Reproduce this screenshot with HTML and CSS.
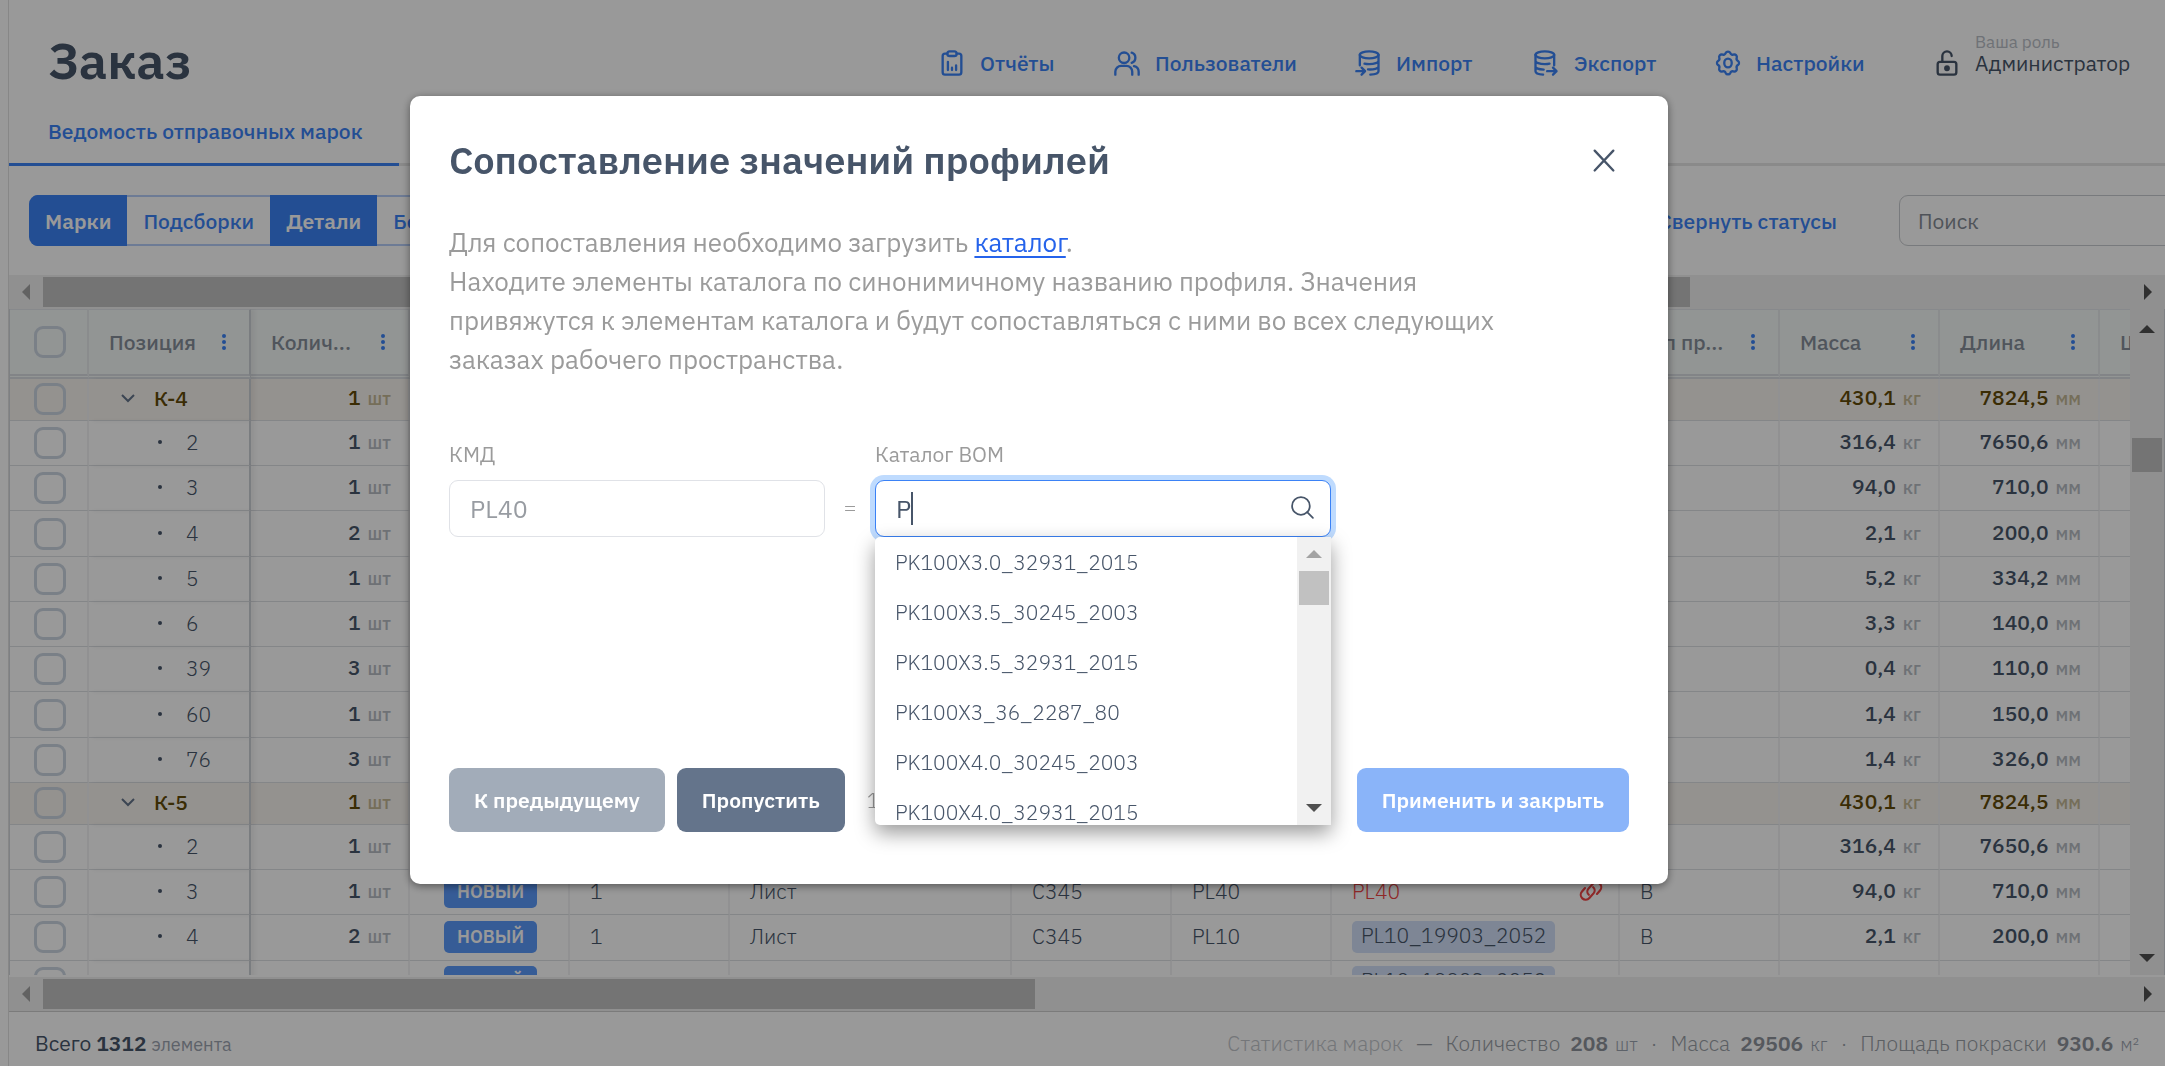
FILE: index.html
```html
<!DOCTYPE html>
<html lang="ru">
<head>
<meta charset="utf-8">
<meta name="viewport" content="width=device-width, initial-scale=1">
<title>Заказ</title>
<link rel="stylesheet" href="styles.css">
</head>
<body>
<div class="page">
  <header class="header">
    <h1 class="title">Заказ</h1>
    <nav class="nav">
      <a class="nav-item" href="#">
        <svg class="icon" viewBox="0 0 24 24"><path d="M8 4H6a2 2 0 0 0-2 2v14a2 2 0 0 0 2 2h12a2 2 0 0 0 2-2V6a2 2 0 0 0-2-2h-2"/><rect x="8" y="2" width="8" height="4" rx="2"/><path d="M8.500 11v7M12 16v2M15.500 14v4"/></svg>
        <span>Отчёты</span></a>
      <a class="nav-item" href="#">
        <svg class="icon" viewBox="0 0 24 24"><circle cx="9.500" cy="7.500" r="4.500"/><path d="M2 22v-2.500a5 5 0 0 1 5-5h4.500a5 5 0 0 1 5 5V22M16 3.200a4.500 4.500 0 0 1 0 8.600M22 22v-2.500a5 5 0 0 0-4-4.800"/></svg>
        <span>Пользователи</span></a>
      <a class="nav-item" href="#">
        <svg class="icon" viewBox="0 0 24 24"><ellipse cx="13" cy="5" rx="8" ry="3"/><path d="M5 5v9M21 5v14c0 1.500-3 2.700-7 3M9 12.600c1.200.3 2.500.4 4 .4 4.500 0 8-1.300 8-3M12 17.500c5 .3 9-.9 9-2.500M2 19h7M6.500 16l3 3-3 3"/></svg>
        <span>Импорт</span></a>
      <a class="nav-item" href="#">
        <svg class="icon" viewBox="0 0 24 24"><ellipse cx="11" cy="5" rx="8" ry="3"/><path d="M19 5v9M3 5v14c0 1.500 3 2.700 6.500 3M3 10c0 1.700 3.500 3 8 3 1.500 0 3-.1 4-.4M3 15c0 1.500 3 2.600 7 2.700M13 19h8M18 16l3 3-3 3"/></svg>
        <span>Экспорт</span></a>
      <a class="nav-item" href="#">
        <svg class="icon" viewBox="0 0 24 24"><path d="M10 3.500a2.200 2.200 0 0 1 4 0 2.200 2.200 0 0 0 3 1.200 2.200 2.200 0 0 1 2.500 2.800 2.200 2.200 0 0 0 1 2.700 2.200 2.200 0 0 1 0 3.600 2.200 2.200 0 0 0-1 2.700 2.200 2.200 0 0 1-2.500 2.800 2.200 2.200 0 0 0-3 1.200 2.200 2.200 0 0 1-4 0 2.200 2.200 0 0 0-3-1.200 2.200 2.200 0 0 1-2.500-2.800 2.200 2.200 0 0 0-1-2.700 2.200 2.200 0 0 1 0-3.600 2.200 2.200 0 0 0 1-2.700A2.200 2.200 0 0 1 7 4.700a2.200 2.200 0 0 0 3-1.200z"/><ellipse cx="12" cy="12" rx="3.200" ry="3.800"/></svg>
        <span>Настройки</span></a>
      <a class="nav-item nav-role" href="#">
        <svg class="icon" viewBox="0 0 24 24"><rect x="4" y="11" width="16" height="11" rx="2"/><path d="M8 11V6a4 4 0 0 1 8 0"/><circle class="fill" cx="12" cy="16.500" r="1.500"/></svg>
        <span class="role"><small class="role-label">Ваша роль</small><span>Администратор</span></span></a>
    </nav>
  </header>

  <div class="tabs"><a class="tab" href="#">Ведомость отправочных марок</a></div>

  <div class="toolbar">
    <div class="segments">
      <button class="segment active">Марки</button>
      <button class="segment">Подсборки</button>
      <button class="segment active">Детали</button>
      <button class="segment">Болты</button>
    </div>
    <button class="collapse">Свернуть статусы</button>
    <input class="search" type="text" placeholder="Поиск" aria-label="Поиск">
  </div>

  <main class="grid">
    <div class="hscroll">
      <span class="cap"><i class="arrow left"></i></span><span class="thumb wide"></span><span class="cap end"><i class="arrow right"></i></span>
    </div>
    <div class="viewport">
      <div class="table-wrap">
        <table class="table">
          <colgroup><col class="c-check"><col class="c-pos"><col class="c-qty"><col class="c-std"><col class="c-std"><col class="c-name"><col class="c-std"><col class="c-std"><col class="c-bom"><col class="c-std"><col class="c-std"><col class="c-std"><col class="c-std"></colgroup>
          <thead><tr id="head"></tr></thead>
          <tbody id="rows"></tbody>
        </table>
      </div>
      <div class="vscroll">
        <span class="cap"><i class="arrow up"></i></span><span class="thumb"></span><span class="cap end"><i class="arrow down"></i></span>
      </div>
    </div>
    <div class="hscroll bottom">
      <span class="cap"><i class="arrow left"></i></span><span class="thumb"></span><span class="cap end"><i class="arrow right"></i></span>
    </div>
  </main>

  <footer class="footer">
    <p class="total">Всего <b>1312</b> <small>элемента</small></p>
    <div class="stats">
      <span class="stats-title">Статистика марок</span><span>—</span>
      <span class="stat">Количество <b>208</b> <small>шт</small></span><span>·</span>
      <span class="stat">Масса <b>29506</b> <small>кг</small></span><span>·</span>
      <span class="stat">Площадь покраски <b>930.6</b> <small>м²</small></span>
    </div>
  </footer>
</div>

<div class="overlay">
  <section class="modal" role="dialog" aria-modal="true" aria-labelledby="modal-title">
    <div class="modal-head">
      <h2 class="modal-title" id="modal-title">Сопоставление значений профилей</h2>
      <button class="close" aria-label="Закрыть"><svg viewBox="0 0 24 24"><path d="M4 4l16 17M20 4L4 21"/></svg></button>
    </div>
    <p class="lead">Для сопоставления необходимо загрузить <a href="#">каталог</a>.<br>Находите элементы каталога по синонимичному названию профиля. Значения привяжутся к элементам каталога и будут сопоставляться с ними во всех следующих заказах рабочего пространства.</p>
    <div class="fields">
      <div class="field kmd">
        <label for="kmd">КМД</label>
        <input class="input" id="kmd" type="text" value="PL40" disabled>
      </div>
      <span class="equals">=</span>
      <div class="field bom">
        <label for="bom">Каталог BOM</label>
        <div class="combo">
          <input class="input focused" id="bom" type="text" value="P" autocomplete="off">
          <i class="caret"></i>
          <svg class="search-icon" viewBox="0 0 24 24"><circle cx="10.500" cy="10.500" r="8.500"/><path d="M16.500 16.500L22 22"/></svg>
          <div class="dropdown">
            <ul class="options" role="listbox" aria-label="Каталог BOM">
              <li role="option">PK100X3.0_32931_2015</li>
              <li role="option">PK100X3.5_30245_2003</li>
              <li role="option">PK100X3.5_32931_2015</li>
              <li role="option">PK100X3_36_2287_80</li>
              <li role="option">PK100X4.0_30245_2003</li>
              <li role="option">PK100X4.0_32931_2015</li>
            </ul>
            <div class="vscroll">
              <span class="cap"><i class="arrow up"></i></span><span class="thumb"></span><span class="cap end"><i class="arrow down"></i></span>
            </div>
          </div>
        </div>
      </div>
    </div>
    <div class="actions">
      <button class="btn muted">К предыдущему</button>
      <button class="btn slate">Пропустить</button>
      <span class="step">1 из 25</span>
      <button class="btn primary">Применить и закрыть</button>
    </div>
  </section>
</div>
<script src="script.js"></script>
</body>
</html>
```
FILE: styles.css
```css
* { box-sizing: border-box; }

body {
  margin: 0;
  height: 100vh;
  overflow: hidden;
  background: #fff;
  color: #475569;
  font: 400 21px/28px "IBM Plex Sans", "Noto Sans", sans-serif;
}

button, input { font: inherit; color: inherit; }
button { border: 0; background: none; padding: 0; cursor: pointer; }
a { color: #3b82f6; text-decoration: none; }
h1, h2, p, ul { margin: 0; padding: 0; }

.page {
  display: flex;
  flex-direction: column;
  height: 100vh;
  margin-left: 8px;
  border-left: 1px solid #e2e2e2;
}

/* Header */
.header {
  display: flex;
  align-items: flex-start;
  justify-content: space-between;
  min-height: 94px;
  padding: 30px 37px 0 39px;
}
.title { font-size: 51px; line-height: 60px; font-weight: 600; }
.nav {
  display: grid;
  grid-template-columns: 175px 241px 178px 182px 219px 195px;
  padding-top: 5px;
}
.nav-item { display: flex; align-items: center; gap: 14px; font-weight: 500; }
.nav-role { color: #475569; font-weight: 400; }
.icon {
  flex: none;
  width: 28px;
  height: 28px;
  fill: none;
  stroke: currentColor;
  stroke-width: 2;
  stroke-linecap: round;
  stroke-linejoin: round;
}
.icon .fill { fill: currentColor; }
.role { display: flex; flex-direction: column; padding-bottom: 14px; }
.role-label { font-size: 17px; line-height: 14px; color: #b9bec6; }

.tabs { border-bottom: 3px solid #e6e6e6; display: flex; }
.tab {
  padding: 23px 36px 18px 39px;
  margin-bottom: -3px;
  border-bottom: 3px solid #3b82f6;
  font-weight: 500;
}

/* Toolbar */
.toolbar {
  display: flex;
  align-items: center;
  padding: 29px 0 29px 20px;
  overflow: hidden;
}
.segments { display: flex; border-radius: 9px; overflow: hidden; }
.segment {
  height: 51px;
  padding: 0 16px;
  border: solid #b6cdf8;
  border-width: 2px 0;
  color: #3b82f6;
  font-weight: 500;
}
.segment.active {
  background: #3b82f6;
  border-color: #3b82f6;
  color: #fff;
  font-weight: 600;
}
.collapse { margin-left: auto; color: #3b82f6; font-weight: 500; }
.search {
  flex: none;
  width: 300px;
  height: 51px;
  margin: 0 -34px 0 62px;
  padding: 0 18px;
  border: 1px solid #c9ccd0;
  border-radius: 9px;
  background: #fff;
}
.search::placeholder { color: #848b94; opacity: 1; }

/* Scrollbars */
.hscroll, .vscroll { display: flex; flex: none; background: #f1f1f1; }
.hscroll { height: 34px; }
.vscroll { width: 34px; flex-direction: column; }
.cap { flex: none; width: 34px; height: 34px; display: grid; place-items: center; }
.cap.end { margin: auto 0 0 auto; }
.arrow { border: 8px solid transparent; width: 0; height: 0; }
.arrow.left { border-left: 0; border-right-color: #a3a3a3; }
.arrow.right { border-right: 0; border-left-color: #505050; }
.arrow.up { border-top: 0; border-bottom-color: #505050; }
.arrow.down { border-bottom: 0; border-top-color: #505050; }
.thumb { flex: none; background: #c1c1c1; }
.hscroll .thumb { width: 46%; margin: 2px 0; }
.hscroll .thumb.wide { width: 76.4%; }
.vscroll .thumb { height: 34px; margin: 0 2px; }

/* Grid */
.grid {
  flex: 1;
  min-height: 0;
  display: flex;
  flex-direction: column;
  border-bottom: 1px solid #cdcdcd;
}
.hscroll.bottom { margin-top: 2px; }
.viewport {
  flex: 1;
  min-height: 0;
  display: flex;
  border: solid #d3d6da;
  border-width: 0 1px;
}
.viewport > .vscroll { padding-top: 3px; }
.viewport > .vscroll .thumb { margin-top: 92px; }
.table-wrap { flex: 1; min-width: 0; overflow: hidden; }
.table {
  width: 2250px;
  height: 697px;
  table-layout: fixed;
  border-collapse: separate;
  border-spacing: 0;
}
.c-check { width: 79px; }
.c-pos { width: 162px; }
.c-qty { width: 159px; }
.c-std { width: 160px; }
.c-name { width: 282px; }
.c-bom { width: 288px; }

.table th {
  height: 70px;
  padding: 0 21px 0 20px;
  background: #f4f8f7;
  border-right: 2px solid #e6e9ec;
  border-top: 1px solid #e2e5e9;
  border-bottom: 5px double #d9dde2;
  color: #858e99;
  font-weight: 500;
  text-align: left;
}
.th-box { display: flex; align-items: center; justify-content: space-between; white-space: nowrap; }
.dots { width: 8px; height: 18px; fill: #3b82f6; }
.table td {
  padding: 0 20px 2px;
  border-right: 2px solid #f2f2f4;
  border-bottom: 1px solid #dcdfe3;
  font-weight: 300;
  white-space: nowrap;
}
.table .check { padding: 0 0 0 2px; text-align: center; }
.table .frozen {
  position: relative;
  border-right: 2px solid #ccd0d6;
  box-shadow: 4px 0 4px rgba(0, 0, 0, .05);
}
.check input {
  appearance: none;
  display: block;
  width: 32px;
  height: 32px;
  margin: 0 auto;
  border: 3px solid #cbd5e1;
  border-radius: 9px;
  background: #fff;
}
.check input:hover { border-color: #94a3b8; }
.group .check input, th.check input { background: none; }
.group td { background: #f7f3ee; color: #624a08; font-weight: 500; }
.pos-box { display: flex; align-items: center; gap: 24px; padding-left: 49px; }
.group .pos-box { gap: 17px; padding-left: 10px; }
.chevron { width: 18px; height: 18px; fill: none; stroke: #64748b; stroke-width: 2; }
.bullet { width: 4px; height: 4px; border-radius: 50%; background: #475569; }
.table .num { padding-right: 17px; text-align: right; font-weight: 500; }
.num small { margin-left: 2px; font-size: 18px; color: #b8bdc4; }
.group .num small { color: #c3b795; }
.tag {
  display: inline-block;
  height: 32px;
  line-height: 32px;
  border-radius: 5px;
  vertical-align: middle;
}
.tag.new {
  margin-left: 14px;
  padding: 0 13px;
  background: #5b99fb;
  color: #fff;
  font-size: 18px;
  font-weight: 600;
}
.tag.match { padding: 0 9px; background: #d2e0f8; line-height: 28px; }
.miss { display: flex; align-items: center; justify-content: space-between; color: #ef4444; }
.miss svg { width: 26px; height: 26px; margin-right: -6px; fill: none; stroke: currentColor; stroke-width: 2; stroke-linecap: round; }

/* Footer */
.footer {
  flex: none;
  display: flex;
  align-items: center;
  justify-content: space-between;
  height: 54px;
  padding: 10px 26px 0;
}
.footer small { font-size: 18px; color: #9ca3af; }
.total b { font-weight: 600; }
.stats { display: flex; gap: 13px; color: #999ea6; font-weight: 300; }
.stats b { margin-left: 5px; font-weight: 600; color: #8e939b; }
.stats small { margin-left: 2px; }
.stats-title { color: #c1c5ca; }

/* Modal */
.overlay {
  position: fixed;
  inset: 0;
  display: flex;
  align-items: flex-start;
  justify-content: center;
  padding: 96px 87px 0 0;
  background: rgba(0, 0, 0, .4);
}
.modal {
  width: 1258px;
  max-width: 100%;
  padding: 40px 39px 52px;
  border-radius: 10px;
  background: #fff;
  box-shadow: 0 2px 8px rgba(0, 0, 0, .45);
}
.modal-head { display: flex; align-items: center; justify-content: space-between; padding-right: 11px; }
.modal-title { font-size: 38px; line-height: 48px; font-weight: 600; }
.close { width: 28px; height: 28px; }
.close svg { display: block; width: 28px; height: 28px; fill: none; stroke: currentColor; stroke-width: 2; stroke-linecap: round; }
.lead {
  max-width: 1090px;
  margin-top: 39px;
  color: #9b9b9b;
  font-size: 26px;
  line-height: 39px;
}
.lead a { color: #2563eb; text-decoration: underline; text-underline-offset: 4px; text-decoration-thickness: 2px; }

.fields { display: flex; align-items: flex-end; margin-top: 61px; }
.field { display: flex; flex-direction: column; gap: 12px; color: #9b9b9b; }
.kmd { width: 376px; }
.bom { width: 456px; }
.input {
  width: 100%;
  height: 57px;
  padding: 0 20px;
  border: 1px solid #e0e2e7;
  border-radius: 9px;
  outline: 0;
  background: #fff;
  color: #475569;
  font-size: 25px;
  font-weight: 400;
}
.input:disabled { color: #989ca2; }
.input.focused { border-color: #3b82f6; box-shadow: 0 0 0 5px #bfdbfe; caret-color: transparent; }
.equals { width: 50px; height: 57px; line-height: 54px; text-align: center; color: #9b9b9b; font-weight: 300; }
.combo { position: relative; display: flex; }
.caret { position: absolute; left: 36px; top: 12px; width: 2px; height: 33px; background: #475569; }
.search-icon {
  position: absolute;
  right: 16px;
  top: 15px;
  width: 25px;
  height: 25px;
  fill: none;
  stroke: #475569;
  stroke-width: 1.7;
  stroke-linecap: round;
}
.dropdown {
  position: absolute;
  left: 0;
  right: 0;
  top: 57px;
  display: flex;
  height: 288px;
  overflow: hidden;
  border-radius: 5px 0 0 5px;
  background: #fff;
  box-shadow: 0 8px 20px rgba(0, 0, 0, .4);
}
.options { flex: 1; list-style: none; color: #475569; font-weight: 300; }
.options li { padding: 11px 20px; line-height: 28px; }
.dropdown .arrow.up { border-bottom-color: #a3a3a3; }

.actions { display: flex; align-items: center; gap: 12px; margin-top: 231px; }
.btn {
  height: 64px;
  padding: 0 25px;
  border-radius: 9px;
  color: #fff;
  font-weight: 600;
}
.muted { background: #a2acb9; }
.slate { background: #64748b; }
.primary { margin-left: auto; background: #8ab4f9; }
.step { margin-left: 10px; color: #9b9b9b; font-weight: 300; }
```
FILE: script.js
```js
const columns = ['Позиция', 'Колич...', 'Статус', 'Сборка', 'Наименование', 'Сталь', 'Профиль', 'Профиль BOM', 'Тип пр...', 'Масса', 'Длина', 'Ширина'];

const details = [
  ['2', '1', 'Двутавр', 'I35Ш2', 'I35SH2_57837_2017', '316,4', '7650,6'],
  ['3', '1', 'Лист', 'PL40', null, '94,0', '710,0'],
  ['4', '2', 'Лист', 'PL10', 'PL10_19903_2052', '2,1', '200,0'],
  ['5', '1', 'Лист', 'PL10', 'PL10_19903_2052', '5,2', '334,2'],
  ['6', '1', 'Лист', 'PL10', 'PL10_19903_2052', '3,3', '140,0'],
  ['39', '3', 'Лист', 'PL10', 'PL10_19903_2052', '0,4', '110,0'],
  ['60', '1', 'Лист', 'PL10', 'PL10_19903_2052', '1,4', '150,0'],
  ['76', '3', 'Лист', 'PL10', 'PL10_19903_2052', '1,4', '326,0'],
];

const check = (name) => `<input type="checkbox" aria-label="${name}">`;
const num = (value, unit) => `<td class="num">${value} <small>${unit}</small></td>`;
const chevron = '<svg class="chevron" viewBox="0 0 18 18"><path d="M3 6l6 6 6-6"/></svg>';
const dots = '<svg class="dots" viewBox="0 0 8 18"><circle cx="4" cy="3" r="2"/><circle cx="4" cy="9" r="2"/><circle cx="4" cy="15" r="2"/></svg>';
const chain = '<svg viewBox="0 0 24 24"><path d="M10 15.500a4 4 0 0 1-.5-5.500l4-4.500a4.500 4.500 0 0 1 6.500-.3 4.500 4.500 0 0 1 .3 6.300l-2.800 3.200"/><path d="M14 8.500a4 4 0 0 1 .5 5.500l-4 4.500a4.500 4.500 0 0 1-6.500.3 4.500 4.500 0 0 1-.3-6.300l2.800-3.200"/></svg>';

const groupRow = (name) => `<tr class="group"><td class="check">${check(name)}</td>
  <td class="frozen"><div class="pos-box">${chevron}<span>${name}</span></div></td>
  ${num('1', 'шт')}<td></td><td></td><td></td><td></td><td></td><td></td><td></td>
  ${num('430,1', 'кг')}${num('7824,5', 'мм')}<td></td></tr>`;

const detailRow = ([pos, qty, name, profile, bom, mass, length]) => `<tr><td class="check">${check(pos)}</td>
  <td class="frozen"><div class="pos-box"><i class="bullet"></i><span>${pos}</span></div></td>
  ${num(qty, 'шт')}<td><span class="tag new">НОВЫЙ</span></td><td>1</td><td>${name}</td>
  <td>${pos === '5' ? 'С255' : 'С345'}</td><td>${profile}</td>
  <td>${bom ? `<span class="tag match">${bom}</span>` : `<div class="miss"><span>${profile}</span>${chain}</div>`}</td>
  <td>B</td>${num(mass, 'кг')}${num(length, 'мм')}<td></td></tr>`;

document.getElementById('head').innerHTML = `<th class="check">${check('Выбрать все')}</th>` +
  columns.map((c, i) => `<th class="${i ? '' : 'frozen'}"><div class="th-box"><span>${c}</span>${dots}</div></th>`).join('');
document.getElementById('rows').innerHTML =
  groupRow('К-4') + details.map(detailRow).join('') +
  groupRow('К-5') + details.slice(0, 4).map(detailRow).join('');
```
